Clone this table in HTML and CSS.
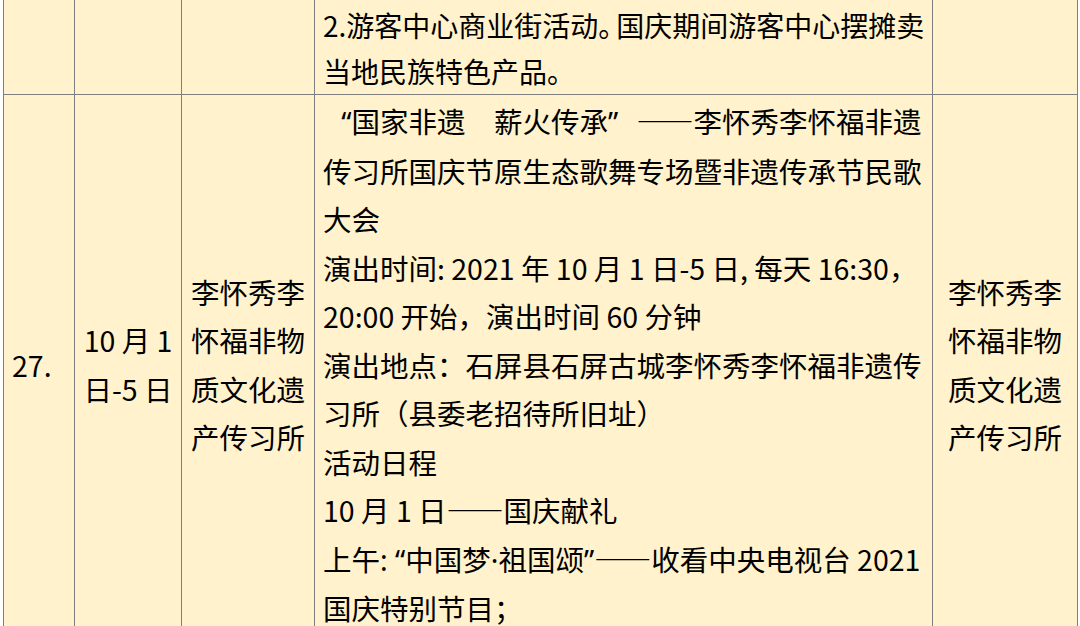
FILE: index.html
```html
<!DOCTYPE html>
<html lang="zh-CN">
<head>
<meta charset="utf-8">
<title>国庆活动表</title>
<link rel="stylesheet" href="styles.css">
</head>
<body>
<div class="sheet">
  <div class="row row-top">
    <div class="cell c1"></div>
    <div class="cell c2"></div>
    <div class="cell c3"></div>
    <div class="cell c4">2.游客中心商业街活动<span class="halt">。</span>国庆期间游客中心摆摊卖<br>当地民族特色产品。</div>
    <div class="cell c5"></div>
  </div>
  <div class="row row-main">
    <div class="cell c1 mid">27.</div>
    <div class="cell c2 mid center">10 月 1<br>日-5 日</div>
    <div class="cell c3 mid center">李怀秀李<br>怀福非物<br>质文化遗<br>产传习所</div>
    <div class="cell c4 body"><span class="ql"><span class="lat">“</span></span>国家非遗　薪火传承<span class="qr"><span class="lat">”</span></span>——李怀秀李怀福非遗<br>传习所国庆节原生态歌舞专场暨非遗传承节民歌<br>大会<br>演出时间: 2021 年 10 月 1 日-5 日, 每天 16:30，<br>20:00 开始，演出时间 60 分钟<br>演出地点：石屏县石屏古城李怀秀李怀福非遗传<br>习所（县委老招待所旧址）<br>活动日程<br>10 月 1 日——国庆献礼<br>上午<span class="lat">: “</span>中国梦<span class="lat">·</span>祖国颂<span class="lat">”</span>——收看中央电视台 2021<br>国庆特别节目；</div>
    <div class="cell c5 mid center">李怀秀李<br>怀福非物<br>质文化遗<br>产传习所</div>
  </div>
</div>
</body>
</html>
```

FILE: styles.css
```css
html, body {
  margin: 0;
  padding: 0;
  background: #ffffff;
  overflow: hidden;
}

body {
  font-family: "Noto Sans CJK SC", "Noto Sans", sans-serif;
  font-size: 28.5px;
  color: #000000;
}

.sheet {
  margin-left: 3px;
  width: 1075px;
  background: #fff2cc;
}

.row {
  display: grid;
  grid-template-columns: 72px 107px 133px 618px 145px;
}

.cell {
  box-sizing: border-box;
  border-right: 1px solid #7f7f7f;
  border-bottom: 1px solid #7f7f7f;
  white-space: nowrap;
  background: #fff2cc;
}

.c1 {
  border-left: 1px solid #7f7f7f;
  padding-left: 8px;
}

.c4 {
  padding-left: 8px;
}

.row-top .cell {
  line-height: 46px;
  padding-top: 2px;
  height: 95px;
}

.row-top .c4 {
  font-size: 28px;
}

.row-main .cell {
  line-height: 48.5px;
}

.body {
  padding-top: 2px;
  padding-bottom: 2px;
}

.mid {
  display: flex;
  flex-direction: column;
  justify-content: center;
}

.center {
  text-align: center;
  align-items: center;
}

.halt {
  letter-spacing: -10px;
}

.lat {
  font-family: "Noto Sans", "DejaVu Sans", sans-serif;
}

.ql, .qr {
  display: inline-block;
  width: 1em;
}

.ql {
  text-align: right;
}

.qr {
  text-align: left;
}
```
